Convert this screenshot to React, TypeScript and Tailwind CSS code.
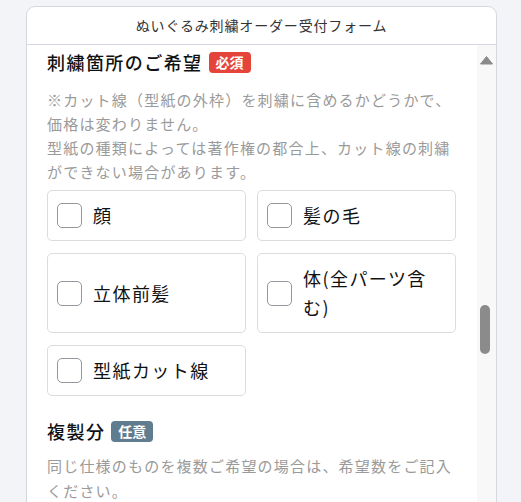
import React from 'react';

const font = { fontFamily: '"Noto Sans CJK JP", "Noto Sans", sans-serif' };

type Option = { id: string; label: string };

const parts: Option[] = [
  { id: 'face', label: '顔' },
  { id: 'hair', label: '髪の毛' },
  { id: 'bangs', label: '立体前髪' },
  { id: 'body', label: '体(全パーツ含む)' },
  { id: 'cutline', label: '型紙カット線' },
];

function Badge({ kind }: { kind: 'required' | 'optional' }) {
  const cls =
    kind === 'required'
      ? 'bg-[#e5443a]'
      : 'bg-[#5f7d8f]';
  return (
    <span
      className={`${cls} ml-[6px] inline-flex h-[21px] w-[42px] items-center justify-center rounded-[4px] text-[14px] font-bold leading-none text-white`}
    >
      {kind === 'required' ? '必須' : '任意'}
    </span>
  );
}

function CheckCard({ label }: { label: string }) {
  return (
    <label className="flex items-center rounded-[5px] border border-[#dcdcdc] bg-white py-[10px] pl-[9px] pr-[10px]">
      <span className="h-[25px] w-[25px] shrink-0 rounded-[5px] border border-[#94989d] bg-white" />
      <span className="ml-[11px] text-[18px] leading-[29px] tracking-[0.08em] text-[#111]">{label}</span>
    </label>
  );
}

function Scrollbar() {
  return (
    <div className="absolute right-0 top-0 bottom-0 w-[19px] bg-[#f8f8f8]">
      <svg className="absolute left-[3px] top-[11px]" width="13" height="9" viewBox="0 0 13 9">
        <path d="M6.5 0.5 L12.5 8 L0.5 8 Z" fill="#8a8a8a" strokeLinejoin="round" stroke="#8a8a8a" strokeWidth="1" />
      </svg>
      <div className="absolute left-[3px] top-[260px] h-[49px] w-[10px] rounded-full bg-[#8b8b8b]" />
    </div>
  );
}

export default function App() {
  return (
    <div className="min-h-screen w-full bg-[#f3f4f8] pt-[6px]" style={font}>
      <div className="ml-[26px] h-[520px] w-[471px] overflow-hidden rounded-t-[9px] border border-[#d5d8de] bg-white">
        <div className="flex h-[38px] items-center justify-center border-b border-[#d5d8de] text-[14px] tracking-[0.06em] text-[#333]">
          ぬいぐるみ刺繍オーダー受付フォーム
        </div>
        <div className="relative h-[480px]">
          <Scrollbar />
          <div className="pl-[20px] pr-[40px] pt-[3px]">
            <div className="flex h-[28px] items-center">
              <h2 className="text-[18px] font-medium leading-[28px] tracking-[0.08em] text-[#111]">刺繍箇所のご希望</h2>
              <Badge kind="required" />
            </div>
            <p className="mt-[12px] text-[15px] leading-[24px] tracking-[0.08em] text-[#9a9a9a]">
              ※カット線（型紙の外枠）を刺繍に含めるかどうかで、価格は変わりません。
              <br />
              型紙の種類によっては著作権の都合上、カット線の刺繍ができない場合があります。
            </p>
            <div className="mt-[6px] grid grid-cols-2 gap-x-[11px] gap-y-[12px]">
              {parts.map((p) => (
                <CheckCard key={p.id} label={p.label} />
              ))}
            </div>
            <div className="mt-[21px] flex h-[28px] items-center">
              <h2 className="text-[18px] font-medium leading-[28px] tracking-[0.08em] text-[#111]">複製分</h2>
              <Badge kind="optional" />
            </div>
            <p className="mt-[8px] text-[15px] leading-[25px] tracking-[0.08em] text-[#9a9a9a]">
              同じ仕様のものを複数ご希望の場合は、希望数をご記入ください。
            </p>
          </div>
        </div>
      </div>
    </div>
  );
}
